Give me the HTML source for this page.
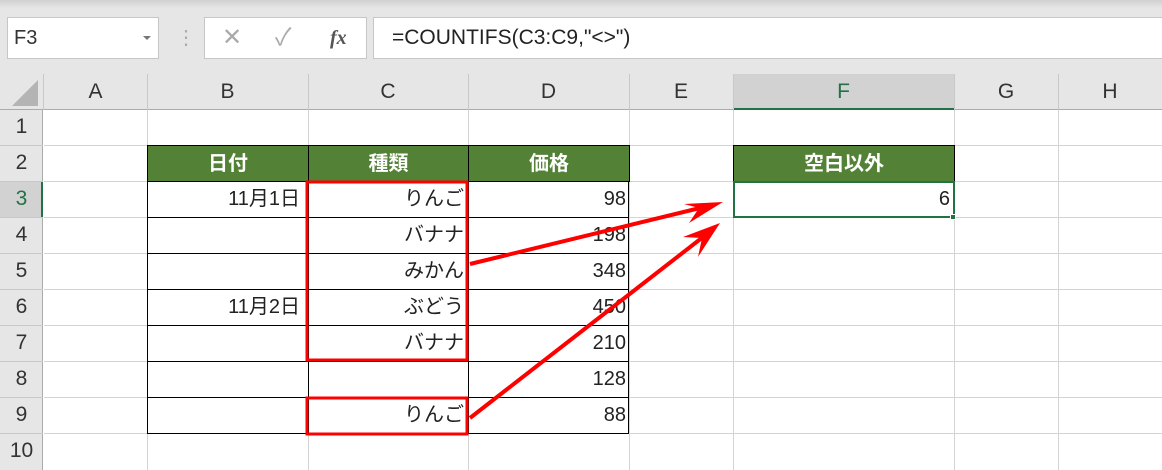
<!DOCTYPE html><html><head><meta charset="utf-8"><style>
body{margin:0;width:1162px;height:470px;overflow:hidden;background:#fff;font-family:"Liberation Sans","Noto Sans CJK JP",sans-serif;position:relative}
.a{position:absolute;box-sizing:border-box}
.t{position:absolute;font-size:20px;color:#222;line-height:36px}
.h{position:absolute;font-size:21px;color:#333;text-align:center;line-height:36px}
.g{position:absolute;background:#538135;color:#fff;font-weight:bold;text-align:center;font-size:20px;line-height:36px;box-sizing:border-box;border:1px solid #000}
</style></head><body>
<div class="a" style="left:0;top:0;width:1162px;height:110px;background:#e6e6e6"></div>
<div class="a" style="left:0;top:0;width:1162px;height:8px;background:linear-gradient(#d0d0d0,#e6e6e6)"></div>
<div class="a" style="left:7px;top:17px;width:152px;height:42px;background:#fff;border:1px solid #c6c6c6"></div>
<div class="t" style="left:14px;top:20px;font-size:20px;color:#333">F3</div>
<div class="a" style="left:143px;top:36px;border-left:4px solid transparent;border-right:4px solid transparent;border-top:4px solid #777"></div>
<div class="t" style="left:176px;top:20px;color:#aaa">⋮</div>
<div class="a" style="left:204px;top:17px;width:163px;height:42px;background:#fff;border:1px solid #c6c6c6"></div>
<div class="t" style="left:222px;top:20px;color:#aaa;font-size:24px">✕</div>
<div class="t" style="left:275px;top:20px;color:#aaa;font-size:24px">✓</div>
<div class="t" style="left:330px;top:20px;color:#555;font-family:'Liberation Serif',serif;font-style:italic;font-weight:bold">fx</div>
<div class="a" style="left:373px;top:17px;width:800px;height:42px;background:#fff;border:1px solid #c6c6c6"></div>
<div class="t" style="left:392px;top:20px;font-size:21px;color:#222">=COUNTIFS(C3:C9,"&lt;&gt;")</div>
<!-- column header -->
<div class="a" style="left:0;top:74px;width:1162px;height:36px;background:#e6e6e6;border-bottom:1px solid #ababab"></div>
<div class="a" style="left:733px;top:74px;width:221px;height:36px;background:#d2d2d2;border-bottom:2px solid #217346"></div>
<div class="a" style="left:12px;top:80px;width:0;height:0;border-left:26px solid transparent;border-bottom:26px solid #b4b4b4"></div>
<div class="a" style="left:0;top:110px;width:43px;height:360px;background:#e6e6e6;border-right:1px solid #ababab"></div>
<div class="a" style="left:0;top:181px;width:43px;height:36px;background:#d2d2d2;border-right:2px solid #217346"></div>
<svg class="a" style="left:0;top:0" width="1162" height="470">
<g stroke="#d4d4d4" stroke-width="1">
<line x1="44" y1="145.5" x2="1162" y2="145.5"/><line x1="44" y1="181.5" x2="1162" y2="181.5"/><line x1="44" y1="217.5" x2="1162" y2="217.5"/><line x1="44" y1="253.5" x2="1162" y2="253.5"/><line x1="44" y1="289.5" x2="1162" y2="289.5"/><line x1="44" y1="325.5" x2="1162" y2="325.5"/><line x1="44" y1="361.5" x2="1162" y2="361.5"/><line x1="44" y1="397.5" x2="1162" y2="397.5"/><line x1="44" y1="433.5" x2="1162" y2="433.5"/>
<line x1="147.5" y1="110" x2="147.5" y2="470"/><line x1="308.5" y1="110" x2="308.5" y2="470"/><line x1="468.5" y1="110" x2="468.5" y2="470"/><line x1="629.5" y1="110" x2="629.5" y2="470"/><line x1="733.5" y1="110" x2="733.5" y2="470"/><line x1="954.5" y1="110" x2="954.5" y2="470"/><line x1="1058.5" y1="110" x2="1058.5" y2="470"/>
</g>
<g stroke="#c8c8c8"><line x1="0" y1="145.5" x2="43" y2="145.5"/><line x1="0" y1="181.5" x2="43" y2="181.5"/><line x1="0" y1="217.5" x2="43" y2="217.5"/><line x1="0" y1="253.5" x2="43" y2="253.5"/><line x1="0" y1="289.5" x2="43" y2="289.5"/><line x1="0" y1="325.5" x2="43" y2="325.5"/><line x1="0" y1="361.5" x2="43" y2="361.5"/><line x1="0" y1="397.5" x2="43" y2="397.5"/><line x1="0" y1="433.5" x2="43" y2="433.5"/>
<line x1="147.5" y1="74" x2="147.5" y2="110"/><line x1="308.5" y1="74" x2="308.5" y2="110"/><line x1="468.5" y1="74" x2="468.5" y2="110"/><line x1="629.5" y1="74" x2="629.5" y2="110"/><line x1="733.5" y1="74" x2="733.5" y2="110"/><line x1="954.5" y1="74" x2="954.5" y2="110"/><line x1="1058.5" y1="74" x2="1058.5" y2="110"/><line x1="43.5" y1="74" x2="43.5" y2="110"/></g>
<g stroke="#000" stroke-width="1">
<rect x="147.5" y="181.5" width="481" height="252" fill="none"/>
<line x1="147.5" y1="217.5" x2="629" y2="217.5"/><line x1="147.5" y1="253.5" x2="629" y2="253.5"/><line x1="147.5" y1="289.5" x2="629" y2="289.5"/><line x1="147.5" y1="325.5" x2="629" y2="325.5"/><line x1="147.5" y1="361.5" x2="629" y2="361.5"/><line x1="147.5" y1="397.5" x2="629" y2="397.5"/>
<line x1="308.5" y1="181" x2="308.5" y2="434"/><line x1="468.5" y1="181" x2="468.5" y2="434"/>
</g>
</svg>
<div class="g" style="left:147px;top:145px;width:162px;height:37px">日付</div>
<div class="g" style="left:308px;top:145px;width:161px;height:37px">種類</div>
<div class="g" style="left:468px;top:145px;width:162px;height:37px">価格</div>
<div class="g" style="left:733px;top:145px;width:222px;height:37px">空白以外</div>
<div class="a" style="left:733px;top:181px;width:222px;height:37px;border:2px solid #217346"></div>
<div class="a" style="left:950px;top:214px;width:6px;height:6px;background:#217346;border:1px solid #fff"></div>
<div class="h" style="left:44px;top:74px;width:103px">A</div>
<div class="h" style="left:147px;top:74px;width:161px">B</div>
<div class="h" style="left:308px;top:74px;width:160px">C</div>
<div class="h" style="left:468px;top:74px;width:161px">D</div>
<div class="h" style="left:629px;top:74px;width:104px">E</div>
<div class="h" style="left:733px;top:74px;width:221px;color:#217346">F</div>
<div class="h" style="left:954px;top:74px;width:104px">G</div>
<div class="h" style="left:1058px;top:74px;width:104px">H</div>
<div class="h" style="left:0;top:109px;width:43px">1</div>
<div class="h" style="left:0;top:145px;width:43px">2</div>
<div class="h" style="left:0;top:181px;width:43px;color:#217346">3</div>
<div class="h" style="left:0;top:217px;width:43px">4</div>
<div class="h" style="left:0;top:253px;width:43px">5</div>
<div class="h" style="left:0;top:289px;width:43px">6</div>
<div class="h" style="left:0;top:325px;width:43px">7</div>
<div class="h" style="left:0;top:361px;width:43px">8</div>
<div class="h" style="left:0;top:397px;width:43px">9</div>
<div class="h" style="left:0;top:433px;width:43px">10</div>
<div class="t" style="right:862px;top:181px">11月1日</div>
<div class="t" style="right:862px;top:289px">11月2日</div>
<div class="t" style="right:698px;top:181px">りんご</div>
<div class="t" style="right:698px;top:217px">バナナ</div>
<div class="t" style="right:698px;top:253px">みかん</div>
<div class="t" style="right:698px;top:289px">ぶどう</div>
<div class="t" style="right:698px;top:325px">バナナ</div>
<div class="t" style="right:698px;top:397px">りんご</div>
<div class="t" style="right:536px;top:181px">98</div>
<div class="t" style="right:536px;top:217px">198</div>
<div class="t" style="right:536px;top:253px">348</div>
<div class="t" style="right:536px;top:289px">450</div>
<div class="t" style="right:536px;top:325px">210</div>
<div class="t" style="right:536px;top:361px">128</div>
<div class="t" style="right:536px;top:397px">88</div>
<div class="t" style="right:212px;top:181px">6</div>
<svg class="a" style="left:0;top:0" width="1162" height="470">
<rect x="307" y="182" width="160" height="178" fill="none" stroke="#f00" stroke-width="3"/>
<rect x="307" y="398" width="160" height="36" fill="none" stroke="#f00" stroke-width="3"/>
<line x1="470" y1="264" x2="700" y2="208" stroke="#f00" stroke-width="4"/>
<polygon points="723,202 689,223 699,208 684,204" fill="#f00"/>
<line x1="470" y1="418" x2="703" y2="237" stroke="#f00" stroke-width="4"/>
<polygon points="720,223 698,257 702,238 683,237" fill="#f00"/>
</svg>
</body></html>
